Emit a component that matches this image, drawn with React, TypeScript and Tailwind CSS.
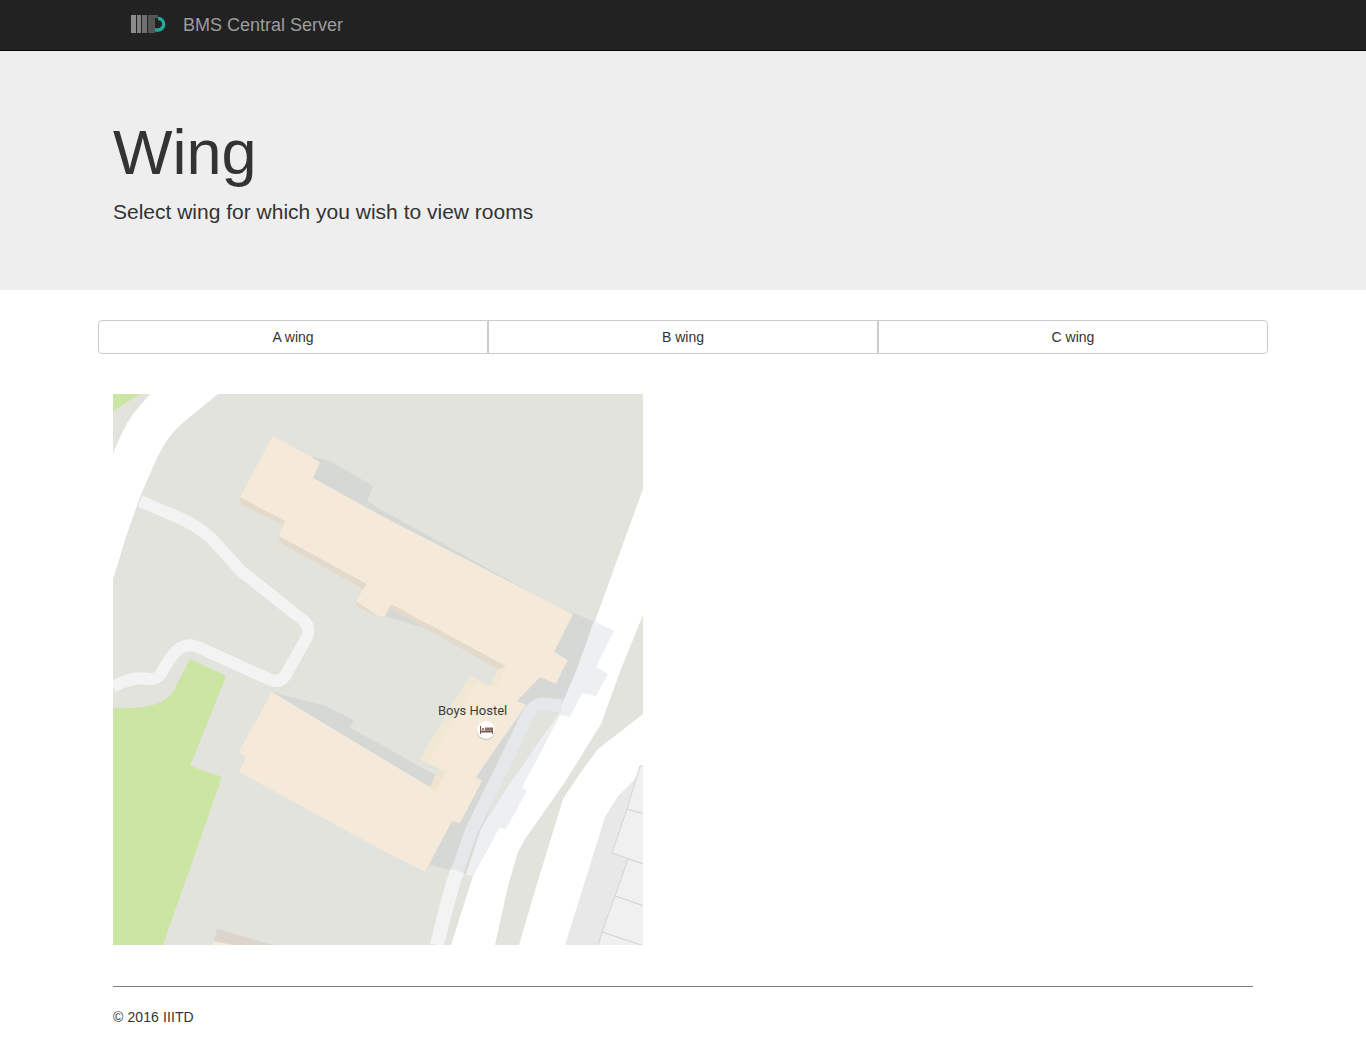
import React from 'react';

const font = "font-['Liberation_Sans',Arial,sans-serif]";

const Logo: React.FC = () => (
  <svg width="37" height="20" viewBox="0 0 37 20" className="block">
    <rect x="0" y="0" width="5" height="18" fill="#8c8c8c" />
    <rect x="6" y="0" width="4" height="18" fill="#808080" />
    <rect x="11" y="0" width="5" height="18" fill="#707070" />
    <path d="M17 0h10v3h-3v15h-7z" fill="#555555" />
    <path d="M27 3.500A5.750 5.750 0 1 1 27 15L24 15" fill="none" stroke="#22a79c" strokeWidth="3.500" />
  </svg>
);

const MapTile: React.FC = () => (
  <div className="relative w-[530px] h-[551px] overflow-hidden">
    <svg width="530" height="551" viewBox="0 0 530 551" className="block">
      <rect width="530" height="551" fill="#e2e3dd" />
      {/* green areas */}
      <polygon points="0,0 27,0 0,17" fill="#cbe5a3" />
      <path d="M77,265 L113,282 L77,372 L109,383 L50,551 L0,551 L0,314 Q30,315 43,310 Q55,306 60,298 Z" fill="#cbe5a3" />
      {/* roads */}
      <path d="M37,0 L105,0 L72,27 Q56,40 47,58 Q40,72 27,103 L13,143 L0,185 L0,60 Q9,36 20,20 Z" fill="#ffffff" />
      <polygon points="530,95 482,227 447,321 409,393 386,434 360,482 338,551 530,551" fill="#ffffff" />
      <polygon points="530,221 508,275 488,330 452,388 412,445 405,458 395,492 382,551 406,551 424,490 450,405 468,378 485,355 530,320" fill="#e2e3dd" />
      <path d="M27,107 L69,125 Q86,133 99,145 L128,177 L190,226 Q198,233 194,243 L172,282 Q167,289 158,286 L85,253 Q76,249 67,254 Q60,258 47,281 Q44,285 36,285 Q20,282 0,293" fill="none" stroke="#f3f3f3" strokeWidth="12" />
      {/* parking */}
      <polygon points="530,372 522,385 505,402 492,423 452,551 530,551" fill="#e8e8e8" />
      <g fill="#f0f0f0" stroke="#d4d4d4" strokeWidth="1">
        <polygon points="527,372 531,372 531,420 514,415" />
        <polygon points="514,415 531,420 531,470 499,459" />
        <polygon points="515,465 531,470 531,512 502,502" />
        <polygon points="502,502 531,512 531,552 489,538" />
        <polygon points="489,538 531,552 485,552" />
      </g>
      {/* building shadows */}
      <g fill="#d6d8d6">
        <polygon points="200,63 217,67 260,92 254,107 265,114 430,205 462,220 481,227 464,275 450,308 428,317 413,332 365,442 352,480 317,471 312,478 400,300 430,240 265,125 200,84" />
        <polygon points="159,298 213,312 241,326 237,334 265,349 322,381 317,393 265,367 160,305" />
        <polygon points="278,210 272,222 320,237 290,215" />
      </g>
      {/* lane */}
      <polygon points="481,227 501,237 483,273 495,280 483,302 469,299 457,323 447,321 409,393 414,397 393,435 386,434 360,482 353,481 368,435 398,388 447,318 450,308 464,275" fill="#eeeff3" />
      <path d="M449,312 L430,310 Q420,310 413,325 L358,438 L344,478" fill="none" stroke="#e5e8ea" strokeWidth="13" />
      <path d="M344,477 Q335,505 324,551" fill="none" stroke="#f3f3f3" strokeWidth="14" />
      {/* buildings, side faces */}
      <polygon points="127,103 172,127 172,132 127,110" fill="#e3dacc" />
      <polygon points="166,142 254,190 252,196 166,148" fill="#e3dacc" />
      <polygon points="243,207 265,219 265,223 243,212" fill="#e3dacc" />
      <polygon points="278,210 393,272 385,275 276,214" fill="#e3dacc" />
      {/* buildings */}
      <polygon points="160,42 207,68 200,84 265,120 432,206 460,220 441,258 455,266 450,275 443,290 427,283 404,307 413,311 363,383 369,387 347,429 339,427 312,478 265,454 126,378 133,363 126,358 159,298 265,362 317,393 322,397 333,378 307,365 357,282 377,293 384,277 393,272 278,210 272,222 265,222 243,207 254,190 166,142 172,127 127,103" fill="#f5ead9" />
      <polygon points="307,365 357,282 366,285 315,369" fill="#f1e8d4" />
      <polygon points="322,397 333,378 326,375 317,393" fill="#efe5cf" />
      <polygon points="377,293 384,277 393,272 385,290" fill="#f1e8d4" />
      {/* bottom building */}
      <polygon points="104,535 160,551 100,551" fill="#ddd5cb" />
      <polygon points="100,547 120,551 100,551" fill="#f5ead9" />
    </svg>
    <span className="absolute left-[325px] top-[309px] text-[13px] leading-4 text-[#3c3c3c] font-['Roboto',sans-serif] [text-shadow:0_0_2px_#f5ead9]">Boys Hostel</span>
    <div className="absolute left-[364px] top-[327px] w-[18px] h-[18px] rounded-full bg-white flex items-center justify-center shadow-[0_1px_1px_rgba(0,0,0,0.2)]">
      <svg width="13" height="8" viewBox="0 0 13 8">
        <path d="M0 0h1v4.500h11v-3h1v6.500h-1v-1.500h-11v1.500h-1z" fill="#7b5a53" />
        <rect x="5" y="1.500" width="7" height="3" fill="#8f716a" />
        <circle cx="3" cy="3" r="1" fill="#7b5a53" />
      </svg>
    </div>
  </div>
);

export default function App() {
  return (
    <div className={`${font} min-h-[1057px] bg-white text-[#333] text-sm`}>
      <nav className="h-[51px] bg-[#222] border-b border-[#080808]">
        <div className="w-[1170px] mx-auto flex items-center h-[50px] pl-[33px]">
          <Logo />
          <span className="ml-[15px] pt-[2px] text-[18px] text-[#9d9d9d]">BMS Central Server</span>
        </div>
      </nav>

      <div className="bg-[#eee] h-[239px]">
        <div className="w-[1170px] mx-auto px-[15px] pt-[67px]">
          <h1 className="text-[63px] leading-[69px] font-normal">Wing</h1>
          <p className="mt-[10px] text-[21px] leading-[30px]">Select wing for which you wish to view rooms</p>
        </div>
      </div>

      <div className="w-[1170px] mx-auto mt-[30px]">
        <div className="flex h-[34px]">
          <button className="flex-1 border border-[#ccc] rounded-l bg-white">A wing</button>
          <button className="flex-1 border border-[#ccc] bg-white">B wing</button>
          <button className="flex-1 border border-[#ccc] rounded-r bg-white">C wing</button>
        </div>

        <div className="px-[15px] mt-[40px]">
          <MapTile />
          <hr className="mt-[41px] border-0 border-t border-[#808080]" />
          <p className="mt-[20px] leading-5 tracking-[0.1px]">© 2016 IIITD</p>
        </div>
      </div>
    </div>
  );
}
